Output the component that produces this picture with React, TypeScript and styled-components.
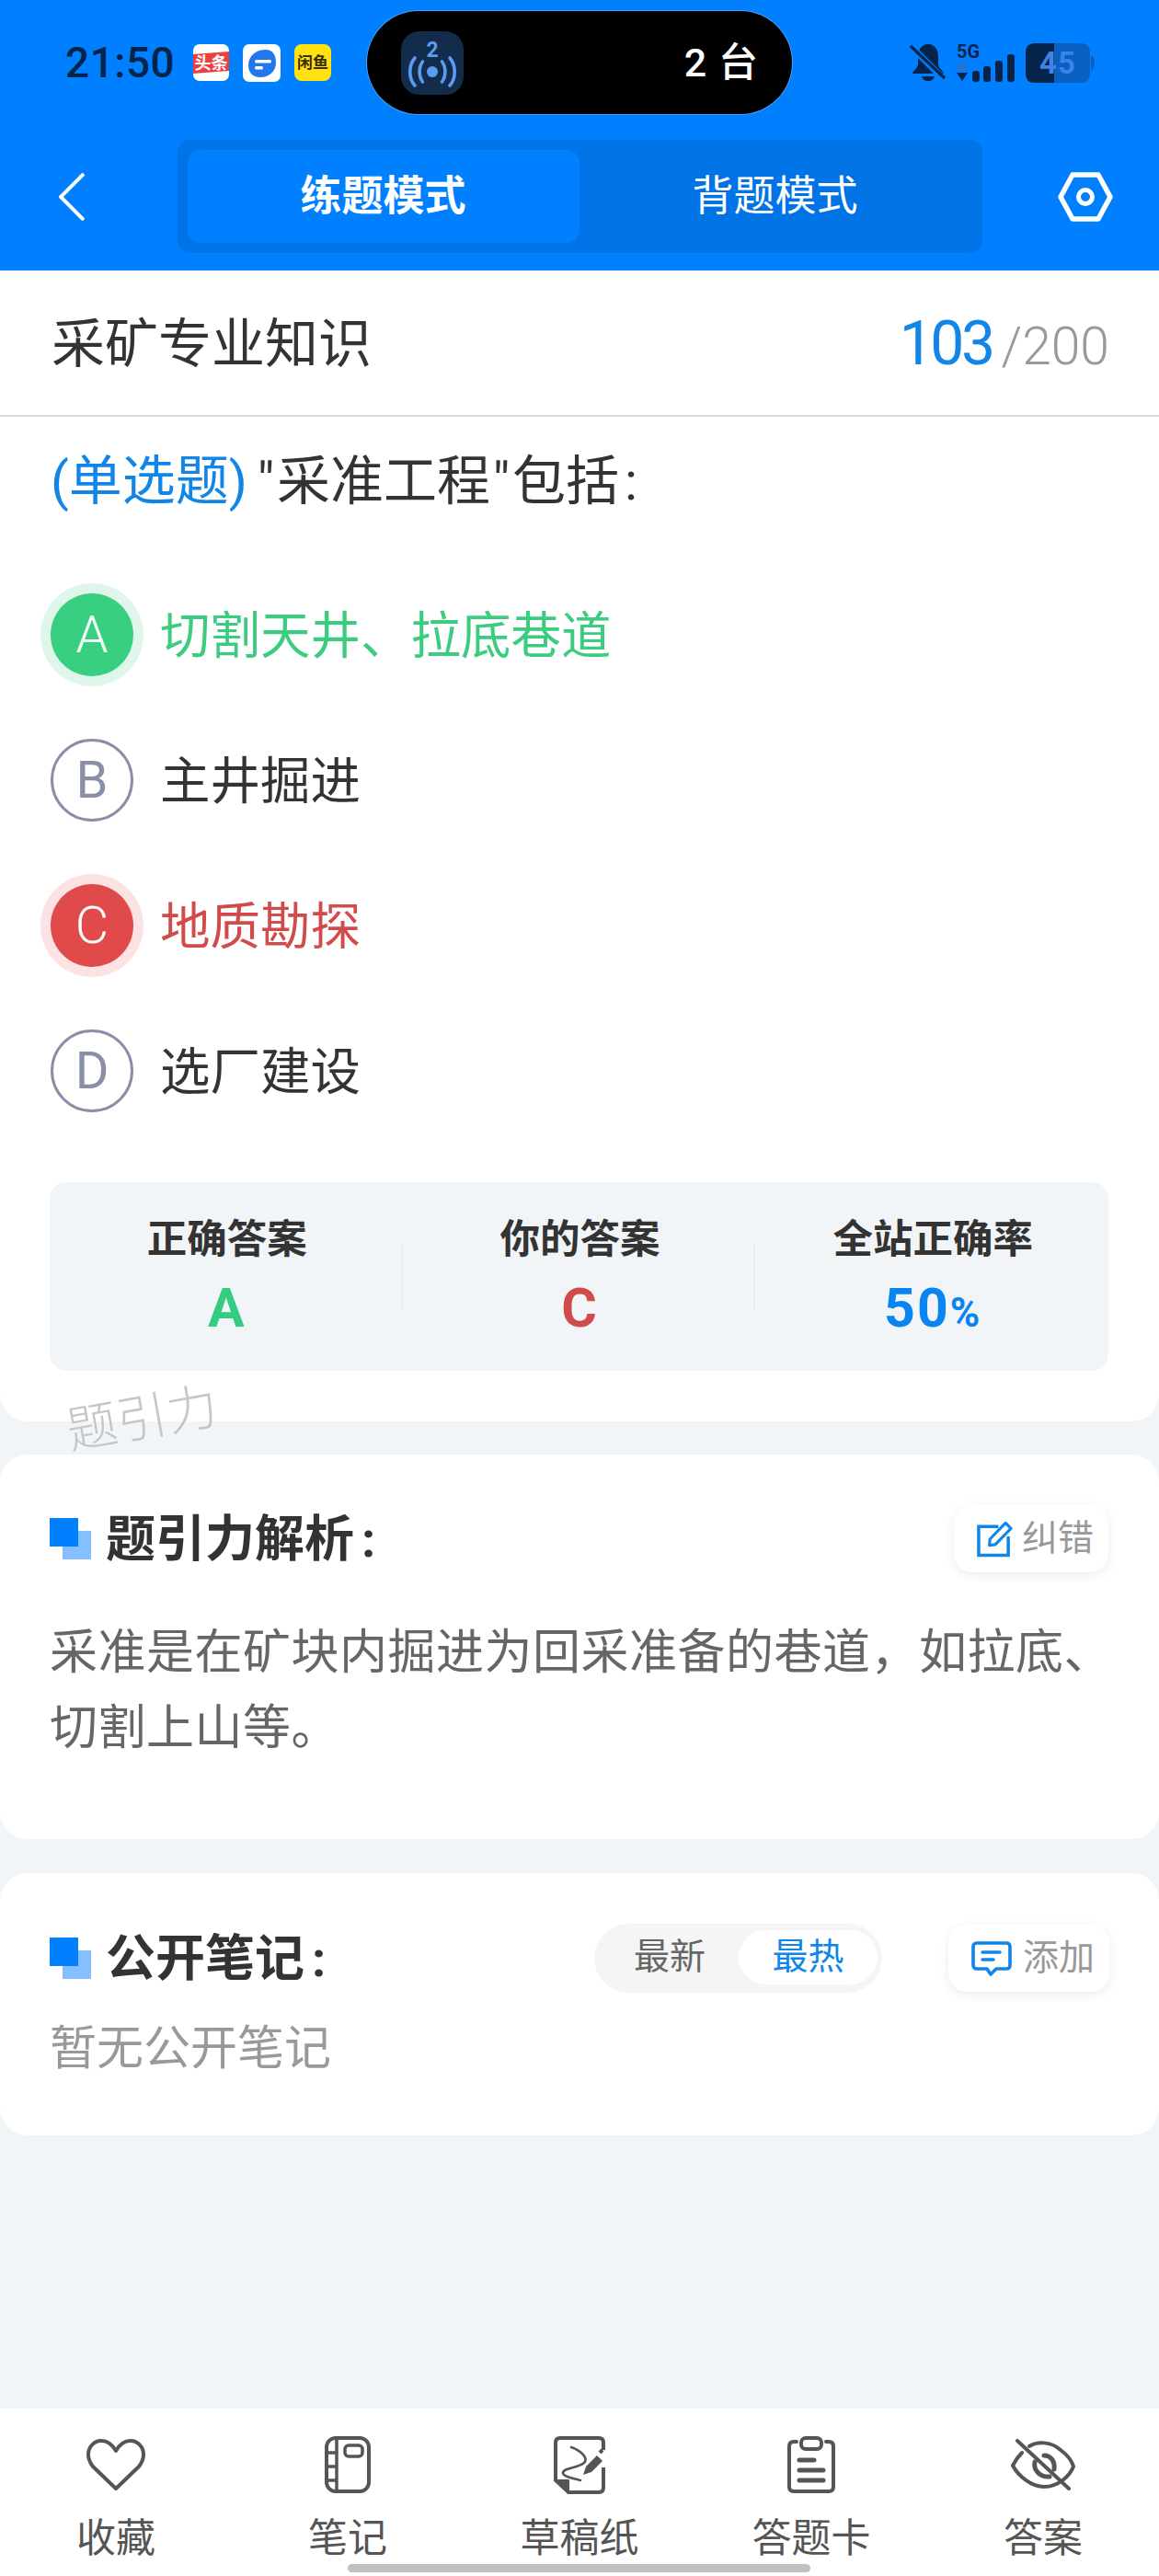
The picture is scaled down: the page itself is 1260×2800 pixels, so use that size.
import React from "react";
import styled, { createGlobalStyle } from "styled-components";

const SANS = `Roboto, "Noto Sans CJK SC", sans-serif`;

const Global = createGlobalStyle`
  html, body { margin: 0; padding: 0; background: #f2f5f8; }
  * { box-sizing: border-box; }
  body { font-family: ${SANS}; }
`;

const Page = styled.div`
  position: relative;
  width: 1260px;
  height: 2800px;
  display: flex;
  flex-direction: column;
  background: #f2f5f8;
  overflow: hidden;
`;

/* ---------- blue header ---------- */
const Header = styled.header`
  height: 294px;
  flex: none;
  background: #0080ff;
  padding-top: 12px;
`;

const StatusRow = styled.div`
  display: grid;
  grid-template-columns: 1fr 462px 1fr;
  height: 112px;
  align-items: center;
`;

const StatusLeft = styled.div`
  display: flex;
  align-items: center;
  padding-left: 71px;
  height: 100%;
`;

const Clock = styled.span`
  font: 500 46px/1 ${SANS};
  color: #06244a;
  width: 139px;
  letter-spacing: 0.5px;
`;

const AppIcons = styled.div`
  display: flex;
  gap: 15px;
  align-items: center;
`;

const Island = styled.div`
  height: 112px;
  border-radius: 56px;
  background: #000;
  box-shadow: 0 0 0 1px rgba(255, 255, 255, 0.25);
  display: flex;
  align-items: center;
  padding: 0 36px 0 37px;
  justify-content: space-between;
`;

const IslandLabel = styled.span`
  font: 500 43px/1 ${SANS};
  color: #fff;
  letter-spacing: 1px;
`;

const StatusRight = styled.div`
  display: flex;
  justify-content: flex-end;
  align-items: center;
  padding-right: 70px;
  height: 100%;
`;

const Nav = styled.nav`
  display: grid;
  grid-template-columns: 1fr 875px 1fr;
  margin-top: 28px;
  align-items: center;
`;

const NavSide = styled.div<{ $end?: boolean }>`
  display: flex;
  justify-content: ${(p) => (p.$end ? "flex-end" : "flex-start")};
  padding: ${(p) => (p.$end ? "0 50px 0 0" : "0 0 0 64px")};
`;

const Segmented = styled.div`
  height: 123px;
  padding: 11px 12px 11px 11px;
  border-radius: 14px;
  background: #0073e6;
  display: grid;
  grid-template-columns: 1fr 1fr;
`;

const Segment = styled.div<{ $active?: boolean }>`
  display: flex;
  align-items: center;
  justify-content: center;
  border-radius: 14px;
  background: ${(p) => (p.$active ? "#0080ff" : "transparent")};
  color: #fff;
  font: ${(p) => (p.$active ? 700 : 400)} 45px/1 ${SANS};
`;

/* ---------- question ---------- */
const Card = styled.section`
  background: #fff;
  border-radius: 30px;
`;

const QuestionCard = styled(Card)`
  position: relative;
  border-radius: 0 0 30px 30px;
  padding-bottom: 55px;
`;

const TitleBar = styled.div`
  height: 159px;
  border-bottom: 2px solid #dcdcdc;
  padding: 0 54px 0 56px;
  display: flex;
  align-items: center;
  justify-content: space-between;
`;

const PaperName = styled.h1`
  margin: 0;
  padding-top: 3px;
  font: 400 58px/1 ${SANS};
  color: #333;
`;

const Progress = styled.div`
  display: flex;
  align-items: baseline;
  gap: 10px;
  padding-top: 2px;
`;

const Current = styled.span`
  font: 400 66px/1 ${SANS};
  color: #1285e8;
  letter-spacing: -3.5px;
`;

const Total = styled.span`
  font: 300 57px/1 ${SANS};
  color: #999;
`;

const Stem = styled.p`
  margin: 30px 0 0;
  padding: 0 55px;
  font: 400 58px/80px ${SANS};
  color: #333;
`;

const KindTag = styled.span`
  color: #1285e8;
  margin-right: 8px;
`;

const Quote = styled.span`
  display: inline-block;
  width: 24px;
  text-align: center;
`;

const Colon = styled.span`
  margin-left: 6px;
`;

const Options = styled.ul`
  list-style: none;
  margin: 48px 0 0;
  padding: 0 0 0 55px;
`;

type State = "right" | "wrong" | undefined;
const tone = { right: "#39cf80", wrong: "#e04a4a" };
const toneText = { right: "#3bcc7f", wrong: "#d24b4b" };
const halo = { right: "#e0f6ea", wrong: "#fbe3e3" };

const OptionRow = styled.li<{ $state: State }>`
  height: 158px;
  display: flex;
  align-items: center;
  gap: 29px;
  font: 400 54.5px/1 ${SANS};
  color: ${(p) => (p.$state ? toneText[p.$state] : "#333")};
`;

const OptionText = styled.span`
  padding-top: 3px;
`;

const OptionBadge = styled.span<{ $state: State }>`
  width: 90px;
  height: 90px;
  border-radius: 50%;
  flex: none;
  display: flex;
  align-items: center;
  justify-content: center;
  font: ${(p) => (p.$state ? 300 : 400)} 56px/1 ${SANS};
  color: ${(p) => (p.$state ? "#f4fff9" : "#8a8fa8")};
  background: ${(p) => (p.$state ? tone[p.$state] : "#fff")};
  border: ${(p) => (p.$state ? "none" : "3px solid #8a8fa8")};
  box-shadow: ${(p) => (p.$state ? `0 0 0 11px ${halo[p.$state]}` : "none")};
`;

const Stats = styled.div`
  margin: 42px 55px 0 54px;
  height: 205px;
  padding-left: 2px;
  border-radius: 18px;
  background: #f2f5f8;
  display: grid;
  grid-template-columns: 1fr 2px 1fr 2px 1fr;
`;

const Stat = styled.div`
  display: flex;
  flex-direction: column;
  align-items: center;
  padding-top: 38px;
`;

const StatDivider = styled.div`
  width: 2px;
  height: 71px;
  margin: 67px 0 0 -2px;
  background: #e9ecf0;
`;

const StatLabel = styled.span`
  font: 700 43.5px/50px ${SANS};
  color: #333;
`;

const StatValue = styled.span<{ $color: string }>`
  margin-top: 21px;
  font: 700 59px/56px ${SANS};
  color: ${(p) => p.$color};
  letter-spacing: 2px;
`;

const Percent = styled.small`
  font-size: 44px;
`;

const Watermark = styled.span`
  position: absolute;
  left: 72px;
  bottom: -27px;
  font: 300 55px/60px ${SANS};
  color: #c6c6c6;
  transform: rotate(-10deg);
`;

/* ---------- analysis and notes ---------- */
const AnalysisCard = styled(Card)`
  margin-top: 36px;
  padding: 55px 55px 79px 54px;
`;

const NotesCard = styled(Card)`
  margin-top: 37px;
  padding: 55px 54px 59px 54px;
`;

const CardHead = styled.div`
  display: flex;
  align-items: center;
`;

const Heading = styled.h2`
  flex: 1;
  margin: 0;
  display: flex;
  align-items: center;
  gap: 16px;
  font: 700 54px/1 ${SANS};
  color: #333;
`;

const HeadingText = styled.span`
  padding-top: 2px;

  ${Colon} {
    margin-left: 8px;
  }
`;

const ChipButton = styled.div`
  height: 73px;
  padding: 0 16px 0 25px;
  border-radius: 20px;
  background: #fff;
  box-shadow: 0 3px 12px rgba(0, 0, 0, 0.08);
  display: flex;
  align-items: center;
  gap: 10px;
  font: 400 39px/1 ${SANS};
  color: #999;
`;

const BodyText = styled.p`
  margin: 47px -20px 0 0;
  font: 400 52px/82px ${SANS};
  letter-spacing: 0.5px;
  color: #666;
`;

const SortToggle = styled.div`
  width: 313px;
  height: 75px;
  margin-right: 72px;
  padding: 7px 5px 9px 7px;
  border-radius: 38px;
  background: #f5f5f5;
  display: grid;
  grid-template-columns: 150px 1fr;
`;

const SortOption = styled.span<{ $active?: boolean }>`
  display: flex;
  align-items: center;
  justify-content: center;
  border-radius: 31px;
  background: ${(p) => (p.$active ? "#fff" : "transparent")};
  color: ${(p) => (p.$active ? "#1285e8" : "#666")};
  font: 400 39px/1 ${SANS};
`;

const EmptyText = styled.p`
  margin: 26px 0 0;
  font: 400 51px/70px ${SANS};
  color: #999;
`;

const Spacer = styled.div`
  flex: 1;
`;

/* ---------- bottom tabs ---------- */
const TabBar = styled.footer`
  flex: none;
  height: 182px;
  background: #fff;
  display: grid;
  grid-template-columns: repeat(5, 1fr);
`;

const Tab = styled.div`
  display: flex;
  flex-direction: column;
  align-items: center;
  padding-top: 28px;
`;

const TabIcon = styled.div`
  height: 66px;
  display: flex;
  align-items: center;
  justify-content: center;
`;

const TabLabel = styled.span`
  margin-top: 24px;
  font: 400 43px/46px ${SANS};
  color: #555;
`;

const HomeIndicator = styled.div`
  position: absolute;
  left: 378px;
  bottom: 4px;
  width: 503px;
  height: 9px;
  border-radius: 5px;
  background: #c0c0c0;
`;

/* ---------- drawings ---------- */
const ToutiaoIcon = () => (
  <svg width="39" height="40" viewBox="0 0 39 40">
    <rect width="39" height="40" rx="7" fill="#fff" />
    <path d="M0 11 L39 8 V29 L0 32 Z" fill="#ee3f3f" />
    <text x="19.5" y="27" fontSize="18" fontWeight="700" fill="#fff" textAnchor="middle" fontFamily='"Noto Sans CJK SC"'>头条</text>
  </svg>
);

const BubbleIcon = () => (
  <svg width="41" height="41" viewBox="0 0 41 41">
    <rect width="41" height="41" rx="7" fill="#fff" />
    <path d="M6 23 C6 12 15 6 25 6 C33 6 36 13 36 20 C36 30 28 36 19 36 C10 36 6 30 6 23 Z" fill="#2277ee" />
    <rect x="13" y="17" width="18" height="3.5" rx="1.5" fill="#fff" />
    <rect x="13" y="24" width="9" height="3.5" rx="1.5" fill="#fff" />
  </svg>
);

const XianyuIcon = () => (
  <svg width="40" height="40" viewBox="0 0 40 40">
    <rect width="40" height="40" rx="8" fill="#ffe20f" />
    <text x="20" y="26" fontSize="17" fontWeight="700" fill="#3a2c00" textAnchor="middle" fontFamily='"Noto Sans CJK SC"'>闲鱼</text>
  </svg>
);

const CastIcon = () => (
  <svg width="68" height="69" viewBox="0 0 68 69">
    <rect width="68" height="69" rx="20" fill="#142c4c" />
    <text x="34" y="28" fontSize="23" fontWeight="700" fill="#5b9bf0" textAnchor="middle" fontFamily="Roboto">2</text>
    <circle cx="34" cy="44" r="6" fill="#5b9bf0" />
    <g fill="none" stroke="#5b9bf0" strokeWidth="3.6" strokeLinecap="round">
      <path d="M23.5 33 C19 39 19 49 23.5 55" />
      <path d="M44.5 33 C49 39 49 49 44.5 55" />
      <path d="M15 29 C8 37 8 51 15 59" />
      <path d="M53 29 C60 37 60 51 53 59" />
    </g>
  </svg>
);

const MutedBell = () => (
  <svg width="40" height="42" viewBox="0 0 40 42">
    <path d="M20 1 C27 1 31 7 31 14 V23 C31 27 36 29 37 33 H3 C4 29 9 27 9 23 V14 C9 7 13 1 20 1 Z" fill="#06244a" />
    <path d="M13 36 H27 C26 40 23 41 20 41 C17 41 14 40 13 36 Z" fill="#06244a" />
    <path d="M2 4 L37 39" stroke="#0080ff" strokeWidth="7" />
    <path d="M1 3 L38 38" stroke="#06244a" strokeWidth="3.4" />
  </svg>
);

const Signal = () => (
  <svg width="66" height="44" viewBox="0 0 66 44" style={{ marginLeft: 11 }}>
    <text x="0" y="17" fontSize="20" fontWeight="700" fill="#06244a" fontFamily="Roboto">5G</text>
    <path d="M6 21 L12 29 H0 Z" fill="#3570b8" />
    <path d="M6 42 L0 33 H12 Z" fill="#06244a" />
    <rect x="17" y="31" width="8" height="12" rx="3" fill="#06244a" />
    <rect x="29" y="26" width="8" height="17" rx="3" fill="#06244a" />
    <rect x="42" y="20" width="8" height="23" rx="3" fill="#06244a" />
    <rect x="55" y="13" width="8" height="30" rx="3" fill="#06244a" />
  </svg>
);

const Battery = () => (
  <svg width="75" height="43" viewBox="0 0 75 43" style={{ marginLeft: 9 }}>
    <path d="M10 0 H31 V43 H10 Q0 43 0 33 V10 Q0 0 10 0 Z" fill="#06244a" />
    <path d="M31 0 H60 Q70 0 70 10 V33 Q70 43 60 43 H31 Z" fill="#0a5fc2" />
    <path d="M71 13 Q75 14 75 21 Q75 29 71 30 Z" fill="#0a5fc2" />
    <text x="35" y="33" fontSize="33" fontWeight="700" fill="#3a84e8" textAnchor="middle" fontFamily="Roboto" letterSpacing="1">45</text>
  </svg>
);

const BackChevron = () => (
  <svg width="28" height="52" viewBox="0 0 28 52">
    <path d="M27 1 L2 26 L27 51" fill="none" stroke="#fff" strokeWidth="4" />
  </svg>
);

const HexNut = () => (
  <svg width="60" height="54" viewBox="0 0 60 54">
    <path d="M16 3 H44 L57 27 L44 51 H16 L3 27 Z" fill="none" stroke="#fff" strokeWidth="5.5" strokeLinejoin="round" />
    <circle cx="30" cy="27" r="7.5" fill="none" stroke="#fff" strokeWidth="5" />
  </svg>
);

const DualSquares = () => (
  <svg width="45" height="45" viewBox="0 0 45 45">
    <rect x="14" y="14" width="31" height="31" fill="#85bfff" />
    <rect width="31" height="31" fill="#0080ff" />
  </svg>
);

const EditIcon = () => (
  <svg width="39" height="40" viewBox="0 0 40 40">
    <path d="M24 6 H2 V38 H35 V17" fill="none" stroke="#1285e8" strokeWidth="3.6" />
    <path d="M14 27 L14.5 20 L32 2 L38 8 L20.5 26 Z" fill="none" stroke="#1285e8" strokeWidth="3.2" strokeLinejoin="round" />
  </svg>
);

const CommentIcon = () => (
  <svg width="46" height="38" viewBox="0 0 46 38">
    <path d="M6 2 H38 Q42 2 42 6 V26 Q42 30 38 30 H27 L21 36 L17 30 H6 Q2 30 2 26 V6 Q2 2 6 2 Z" fill="none" stroke="#1285e8" strokeWidth="3.6" strokeLinejoin="round" />
    <path d="M12 12 H31 M12 20 H24" stroke="#1285e8" strokeWidth="3.6" strokeLinecap="round" />
  </svg>
);

const HeartIcon = () => (
  <svg width="64" height="56" viewBox="0 0 64 56">
    <path d="M32 13 C28 6 23 2 16 2 C8 2 2 9 2 17 C2 22 4 26 7 30 L32 54 L57 30 C60 26 62 22 62 17 C62 9 56 2 48 2 C41 2 36 6 32 13 Z" fill="none" stroke="#555" strokeWidth="4" strokeLinejoin="round" />
  </svg>
);

const NotebookIcon = () => (
  <svg width="50" height="62" viewBox="0 0 50 62">
    <rect x="2" y="2" width="46" height="58" rx="10" fill="none" stroke="#555" strokeWidth="4" />
    <path d="M13 2 V60 M2 18 H13 M2 33 H13 M2 48 H13" stroke="#555" strokeWidth="3.5" />
    <rect x="22" y="10" width="19" height="12" rx="4" fill="none" stroke="#555" strokeWidth="3.5" />
  </svg>
);

const DraftIcon = () => (
  <svg width="56" height="63" viewBox="0 0 56 63">
    <path d="M54 34 V56 Q54 61 49 61 H16 L2 48 V7 Q2 2 7 2 H49 Q54 2 54 7 V15" fill="none" stroke="#555" strokeWidth="4" />
    <path d="M2 48 H16 V61 Z" fill="#555" stroke="#555" strokeWidth="2" strokeLinejoin="round" />
    <path d="M19 12 C30 16 38 24 33 29 C26 35 10 34 10 40 C10 44 22 46 29 48" fill="none" stroke="#555" strokeWidth="2.6" strokeLinecap="round" />
    <path d="M32 42 L35 33 L47 21 L53 27 L41 39 Z" fill="#555" />
    <path d="M50 18 L53 15" stroke="#555" strokeWidth="4" />
  </svg>
);

const ClipboardIcon = () => (
  <svg width="54" height="63" viewBox="0 0 54 63">
    <path d="M11 6 H8 Q3 6 3 11 V55 Q3 60 8 60 H46 Q51 60 51 55 V11 Q51 6 46 6 H43" fill="none" stroke="#555" strokeWidth="4" strokeLinecap="round" />
    <rect x="16" y="2" width="22" height="12" rx="5" fill="none" stroke="#555" strokeWidth="4" />
    <path d="M14 26 H30 M14 37 H40 M14 48 H40" stroke="#555" strokeWidth="5" strokeLinecap="round" />
  </svg>
);

const EyeOffIcon = () => (
  <svg width="70" height="56" viewBox="0 0 70 56">
    <g fill="none" stroke="#555" strokeWidth="4" strokeLinecap="round">
      <path d="M20 8 C28 3 43 2 54 12 C62 18 66 23 68 30 C64 40 52 52 36 52 C22 52 8 40 2 29 C5 23 8 19 12 15" />
      <path d="M7 2 L63 54" />
      <path d="M26 25 C24 34 32 42 42 41" strokeWidth="5" />
      <path d="M36 18 C44 18 48 25 47 33" strokeWidth="5" />
    </g>
  </svg>
);

const options: { key: string; text: string; state: State }[] = [
  { key: "A", text: "切割天井、拉底巷道", state: "right" },
  { key: "B", text: "主井掘进", state: undefined },
  { key: "C", text: "地质勘探", state: "wrong" },
  { key: "D", text: "选厂建设", state: undefined },
];

const tabs = [
  { label: "收藏", icon: <HeartIcon /> },
  { label: "笔记", icon: <NotebookIcon /> },
  { label: "草稿纸", icon: <DraftIcon /> },
  { label: "答题卡", icon: <ClipboardIcon /> },
  { label: "答案", icon: <EyeOffIcon /> },
];

const analysis = "采准是在矿块内掘进为回采准备的巷道\uFF0C如拉底、切割上山等。";

export default function App() {
  return (
    <Page>
      <Global />
      <Header>
        <StatusRow>
          <StatusLeft>
            <Clock>21:50</Clock>
            <AppIcons>
              <ToutiaoIcon />
              <BubbleIcon />
              <XianyuIcon />
            </AppIcons>
          </StatusLeft>
          <Island>
            <CastIcon />
            <IslandLabel>2 台</IslandLabel>
          </Island>
          <StatusRight>
            <MutedBell />
            <Signal />
            <Battery />
          </StatusRight>
        </StatusRow>
        <Nav>
          <NavSide>
            <BackChevron />
          </NavSide>
          <Segmented>
            <Segment $active>练题模式</Segment>
            <Segment>背题模式</Segment>
          </Segmented>
          <NavSide $end>
            <HexNut />
          </NavSide>
        </Nav>
      </Header>

      <QuestionCard>
        <TitleBar>
          <PaperName>采矿专业知识</PaperName>
          <Progress>
            <Current>103</Current>
            <Total>/200</Total>
          </Progress>
        </TitleBar>
        <Stem>
          <KindTag>(单选题)</KindTag>
          <Quote>"</Quote>采准工程<Quote>"</Quote>包括<Colon>:</Colon>
        </Stem>
        <Options>
          {options.map((o) => (
            <OptionRow key={o.key} $state={o.state}>
              <OptionBadge $state={o.state}>{o.key}</OptionBadge>
              <OptionText>{o.text}</OptionText>
            </OptionRow>
          ))}
        </Options>
        <Stats>
          <Stat>
            <StatLabel>正确答案</StatLabel>
            <StatValue $color="#34cc80">A</StatValue>
          </Stat>
          <StatDivider />
          <Stat>
            <StatLabel>你的答案</StatLabel>
            <StatValue $color="#d24b4b">C</StatValue>
          </Stat>
          <StatDivider />
          <Stat>
            <StatLabel>全站正确率</StatLabel>
            <StatValue $color="#0a84f0">
              50<Percent>%</Percent>
            </StatValue>
          </Stat>
        </Stats>
        <Watermark>题引力</Watermark>
      </QuestionCard>

      <AnalysisCard>
        <CardHead>
          <Heading>
            <DualSquares />
            <HeadingText>
              题引力解析<Colon>:</Colon>
            </HeadingText>
          </Heading>
          <ChipButton>
            <EditIcon />
            纠错
          </ChipButton>
        </CardHead>
        <BodyText>{analysis}</BodyText>
      </AnalysisCard>

      <NotesCard>
        <CardHead>
          <Heading>
            <DualSquares />
            <HeadingText>
              公开笔记<Colon>:</Colon>
            </HeadingText>
          </Heading>
          <SortToggle>
            <SortOption>最新</SortOption>
            <SortOption $active>最热</SortOption>
          </SortToggle>
          <ChipButton>
            <CommentIcon />
            添加
          </ChipButton>
        </CardHead>
        <EmptyText>暂无公开笔记</EmptyText>
      </NotesCard>

      <Spacer />

      <TabBar>
        {tabs.map((t) => (
          <Tab key={t.label}>
            <TabIcon>{t.icon}</TabIcon>
            <TabLabel>{t.label}</TabLabel>
          </Tab>
        ))}
      </TabBar>
      <HomeIndicator />
    </Page>
  );
}
